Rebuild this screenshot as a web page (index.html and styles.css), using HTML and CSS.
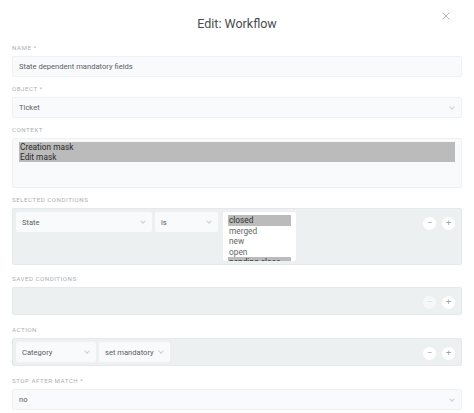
FILE: index.html
```html
<!DOCTYPE html>
<html>
<head>
<meta charset="utf-8">
<link rel="stylesheet" href="styles.css">
</head>
<body>
<div class="modal">
  <div class="header">
    <h1 class="title">Edit: Workflow</h1>
    <span class="close"><svg width="8" height="8" viewBox="0 0 8 8"><path d="M0.5 0.5L7.5 7.5M7.5 0.5L0.5 7.5" stroke="#b4b7b9" stroke-width="1"/></svg></span>
  </div>

  <div class="field">
    <div class="label">Name *</div>
    <div class="input">State dependent mandatory fields</div>
  </div>

  <div class="field">
    <div class="label">Object *</div>
    <div class="input select">Ticket<span class="chev"></span></div>
  </div>

  <div class="field">
    <div class="label">Context</div>
    <div class="multi">
      <div class="opt sel">Creation mask</div>
      <div class="opt sel">Edit mask</div>
    </div>
  </div>

  <div class="field">
    <div class="label">Selected conditions</div>
    <div class="block tall">
      <div class="row">
        <div class="sbox w136">State<span class="chev"></span></div>
        <div class="sbox w63">is<span class="chev"></span></div>
        <div class="list">
          <div class="li sel">closed</div>
          <div class="li">merged</div>
          <div class="li">new</div>
          <div class="li">open</div>
          <div class="li sel">pending close</div>
        </div>
      </div>
      <div class="btns">
        <span class="circ">&#8722;</span><span class="circ">+</span>
      </div>
    </div>
  </div>

  <div class="field">
    <div class="label">Saved conditions</div>
    <div class="block short">
      <div class="row"></div>
      <div class="btns mid">
        <span class="circ dis">&#8722;</span><span class="circ">+</span>
      </div>
    </div>
  </div>

  <div class="field">
    <div class="label">Action</div>
    <div class="block short">
      <div class="row">
        <div class="sbox w80">Category<span class="chev"></span></div>
        <div class="sbox w71">set mandatory<span class="chev"></span></div>
      </div>
      <div class="btns mid">
        <span class="circ">&#8722;</span><span class="circ">+</span>
      </div>
    </div>
  </div>

  <div class="field">
    <div class="label">Stop after match *</div>
    <div class="input select">no<span class="chev"></span></div>
  </div>
</div>
</body>
</html>
```
FILE: styles.css
```css
* { box-sizing: border-box; }
html, body { margin: 0; padding: 0; background: #fff; }
body {
  font-family: "Roboto", "Open Sans", sans-serif;
  color: #5c6064;
  font-size: 7.6px;
}
.modal { width: 474px; padding: 0 12px; }
.header { position: relative; height: 43px; display: flex; align-items: center; justify-content: center; }
.title { margin: 0; font-weight: 400; font-size: 12.5px; color: #484b4e; padding-top: 4px; }
.close { position: absolute; right: 12px; top: 12px; }
.field { display: flex; flex-direction: column; }
.label {
  height: 13px;
  font-size: 6.2px;
  text-transform: uppercase;
  letter-spacing: 0.5px;
  color: #acafb2;
  line-height: 11px;
}
.input {
  height: 21px;
  background: #f9fafb;
  border: 1px solid #eff1f3;
  border-radius: 2px;
  display: flex;
  align-items: center;
  padding: 0 6px;
  font-size: 7.6px;
  margin-bottom: 7px;
  position: relative;
}
.chev {
  position: absolute;
  right: 7px;
  top: 50%;
  width: 4px; height: 4px;
  margin-top: -3px;
  border-right: 1px solid #cdd0d2;
  border-bottom: 1px solid #cdd0d2;
  transform: rotate(45deg);
}
.multi {
  height: 50px;
  background: #f9fafb;
  border: 1px solid #eff1f3;
  border-radius: 2px;
  padding: 3px 6px;
  margin-bottom: 7px;
}
.opt { line-height: 10px; font-size: 8.3px; color: #2a2a2a; padding-left: 1px; }
.opt.sel { background: #bbbbbb; }
.block {
  background: #edf0f1;
  border: 1px solid #e6e9eb;
  border-radius: 2px;
  padding: 3px 3px;
  display: flex;
  justify-content: space-between;
  margin-bottom: 9px;
}
.block.tall { height: 57px; }
.block.short { height: 28px; margin-bottom: 10px; }
.row { display: flex; gap: 3px; align-items: flex-start; }
.sbox {
  height: 20px;
  background: #f9fafb;
  border-radius: 2px;
  display: flex;
  align-items: center;
  padding: 0 6px;
  font-size: 7.6px;
  position: relative;
}
.w136 { width: 136px; }
.w63 { width: 63px; margin-right: 2px; }
.w80 { width: 80px; }
.w71 { width: 71px; }
.list {
  width: 73px;
  height: 49px;
  background: #fff;
  padding: 3px 5px;
  overflow: hidden;
  font-size: 8.3px;
  border-radius: 2px;
}
.li { line-height: 10.5px; color: #666; padding-left: 1px; }
.li.sel { background: #bbbbbb; color: #333; }
.btns { display: flex; gap: 6px; padding-top: 5px; padding-right: 3px; }
.btns.mid { padding-top: 5px; }
.circ {
  width: 13px; height: 13px; border-radius: 50%;
  background: #fff;
  display: flex; align-items: center; justify-content: center;
  font-size: 9px; color: #a0a3a6; line-height: 1;
}
.circ.dis { background: #f6f7f8; color: #d6d8da; }
```
